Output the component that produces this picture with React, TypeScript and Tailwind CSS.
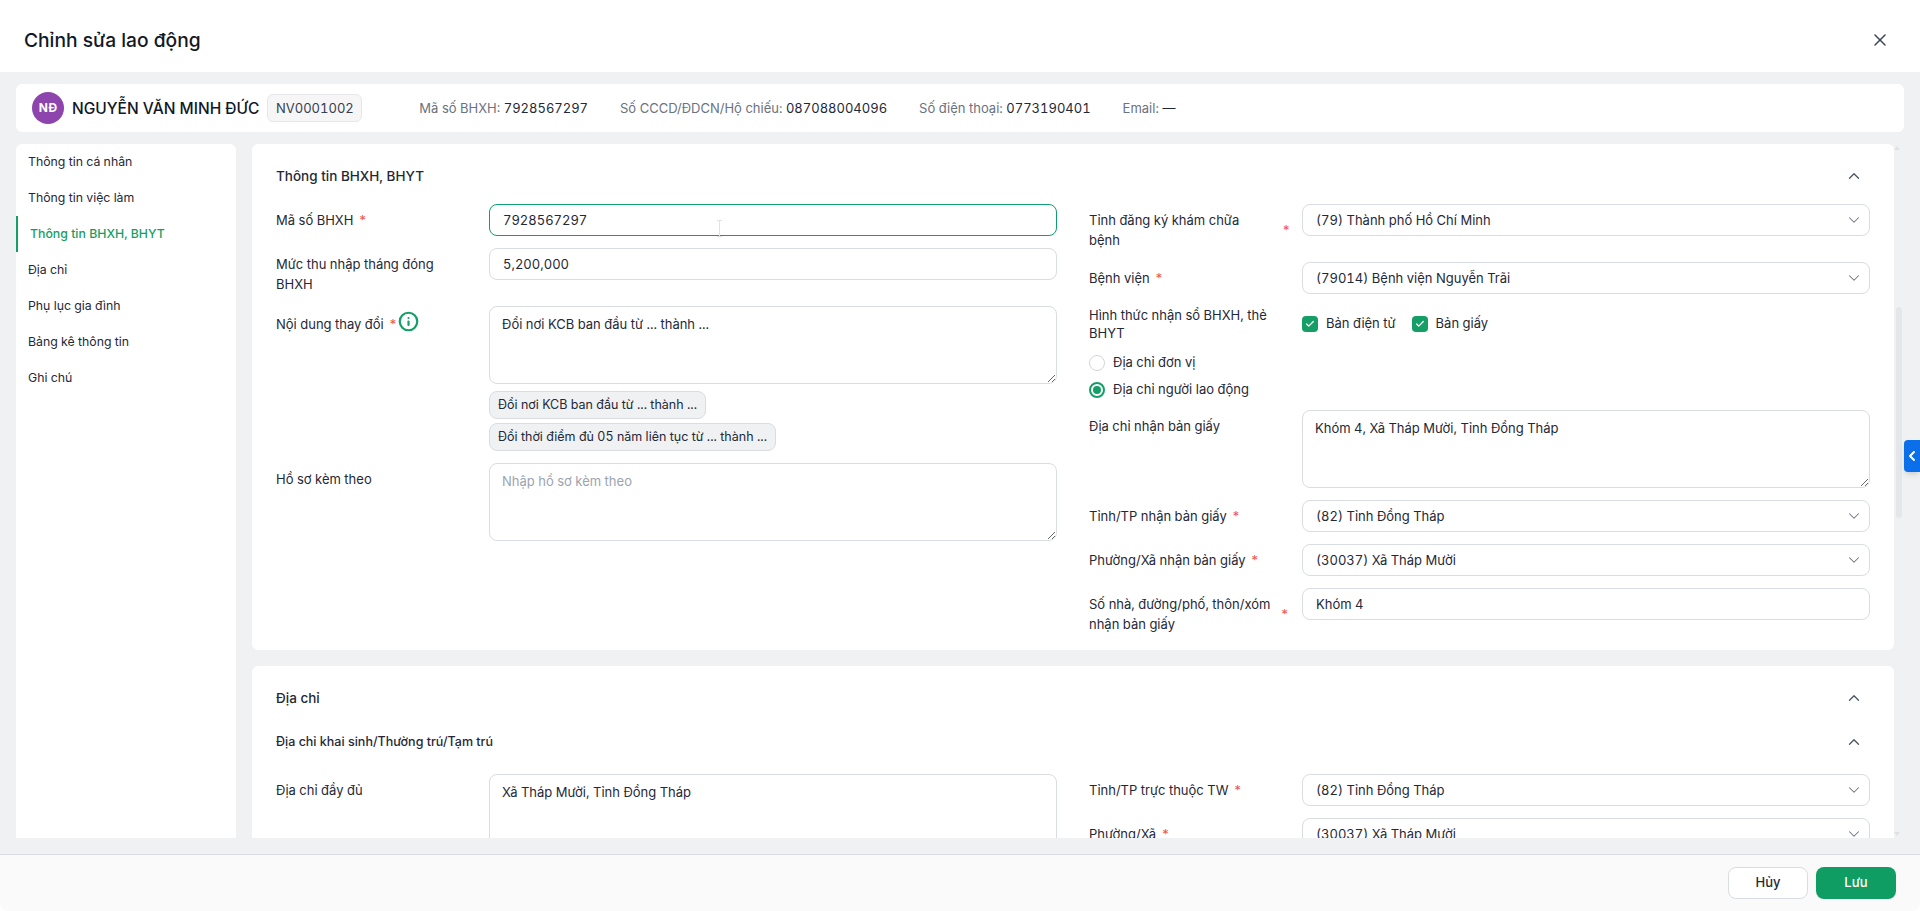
import { ReactNode } from 'react';
import { Check, ChevronDown, ChevronLeft, ChevronUp, Info, X } from 'lucide-react';

const navItems = [
  'Thông tin cá nhân',
  'Thông tin việc làm',
  'Thông tin BHXH, BHYT',
  'Địa chỉ',
  'Phụ lục gia đình',
  'Bảng kê thông tin',
  'Ghi chú',
];

const Star = () => <span className="shrink-0 text-[#f05252]">*</span>;

const Label = ({ text, required, tight }: { text: ReactNode; required?: boolean; tight?: boolean }) => (
  <div className={`flex w-[200px] shrink-0 items-center gap-[5px] self-start text-[13px] text-[#1f2937] ${tight ? 'leading-[18px]' : 'leading-5 pt-[6px]'}`}>
    <span>{text}</span>
    {required && <Star />}
  </div>
);

const Row = ({ children }: { children: ReactNode }) => <div className="flex gap-[13px]">{children}</div>;

const TextInput = ({ value, focused }: { value: string; focused?: boolean }) => (
  <input
    readOnly
    defaultValue={value}
    className={`h-8 min-w-0 flex-1 rounded-lg border bg-white px-[13px] text-[13px] text-[#1f2937] outline-none ${focused ? 'border-[#0e9f6e]' : 'border-[#d9dce1]'}`}
  />
);

const TextArea = ({ value, placeholder }: { value?: string; placeholder?: string }) => (
  <textarea
    readOnly
    defaultValue={value}
    placeholder={placeholder}
    className="block h-[78px] w-full rounded-lg border border-[#d9dce1] bg-white px-3 py-[7px] text-[13px] leading-5 text-[#1f2937] outline-none placeholder:text-[#9ca3af]"
  />
);

const Select = ({ value }: { value: string }) => (
  <div className="flex h-8 min-w-0 flex-1 items-center justify-between rounded-lg border border-[#d9dce1] bg-white pl-[13px] pr-[6px] text-[13px] text-[#1f2937]">
    <span className="pt-px">{value}</span>
    <ChevronDown size={18} strokeWidth={1.4} className="text-[#6b7280]" />
  </div>
);

const Checkbox = ({ label }: { label: string }) => (
  <div className="flex items-center gap-2 text-[13px] text-[#1f2937]">
    <span className="flex size-4 items-center justify-center rounded-[4px] bg-[#169e67]">
      <Check size={10} strokeWidth={3} className="text-white" />
    </span>
    {label}
  </div>
);

const Radio = ({ label, checked }: { label: string; checked?: boolean }) => (
  <div className="flex h-[18px] items-center gap-2 text-[13px] text-[#1f2937]">
    {checked ? (
      <span className="flex size-4 items-center justify-center rounded-full border-2 border-[#169e67]">
        <span className="size-2 rounded-full bg-[#169e67]" />
      </span>
    ) : (
      <span className="size-4 rounded-full border border-[#d1d5db] bg-white" />
    )}
    {label}
  </div>
);

const SectionHead = ({ title, small }: { title: string; small?: boolean }) => (
  <div className="flex h-8 items-center justify-between pr-[7px]">
    <span className={`pt-px font-medium text-[#1f2937] ${small ? 'text-[12.5px]' : 'text-[13.5px]'}`}>{title}</span>
    <ChevronUp size={18} strokeWidth={1.75} className="text-[#4b5563]" />
  </div>
);

const Meta = ({ label, value }: { label: string; value: string }) => (
  <span className="pt-px text-[13px] text-[#6b7280]">
    {label} <span className="text-[#1f2937]">{value}</span>
  </span>
);

export default function App() {
  return (
    <div className="flex h-screen flex-col overflow-hidden bg-white font-['Inter',sans-serif] tabular-nums">
      <header className="flex h-[72px] shrink-0 items-center justify-between pl-6 pr-[30px] pt-2">
        <h1 className="text-[19.2px] font-medium text-[#111827]">Chỉnh sửa lao động</h1>
        <X size={20} strokeWidth={1.75} className="text-[#374151]" />
      </header>

      <main className="flex min-h-0 flex-1 flex-col gap-3 bg-[#f0f1f3] pl-4 pr-4 pt-3 pb-4">
        <div className="flex h-12 shrink-0 items-center rounded-md bg-white pl-4">
          <span className="flex size-8 items-center justify-center rounded-full bg-[#8e44ad] text-[12px] font-bold text-white">NĐ</span>
          <span className="ml-2 pt-px text-[15.5px] font-medium text-[#111827]">NGUYỄN VĂN MINH ĐỨC</span>
          <span className="ml-2 flex h-7 w-[95px] items-center justify-center rounded-md border border-[#e5e7eb] bg-[#f6f6f7] pt-px text-[13px] text-[#374151]">NV0001002</span>
          <div className="ml-[57px] flex gap-8">
            <Meta label="Mã số BHXH:" value="7928567297" />
            <Meta label="Số CCCD/ĐDCN/Hộ chiếu:" value="087088004096" />
            <Meta label="Số điện thoại:" value="0773190401" />
            <Meta label="Email:" value="—" />
          </div>
        </div>

        <div className="flex min-h-0 flex-1 gap-4">
          <nav className="w-[220px] shrink-0 rounded-t-md bg-white">
            {navItems.map((item, i) => (
              <div
                key={item}
                className={`flex h-9 items-center pt-px text-[12.3px] ${i === 2 ? 'border-l-2 border-[#169e67] pl-3 font-medium text-[#169e67]' : 'pl-3 text-[#1f2937]'}`}
              >
                {item}
              </div>
            ))}
          </nav>

          <div className="relative min-w-0 flex-1 overflow-hidden pr-[10px]">
            <section className="rounded-md bg-white px-6 pb-4 pt-4">
              <SectionHead title="Thông tin BHXH, BHYT" />
              <div className="mt-3 grid grid-cols-2 gap-8">
                <div className="flex flex-col gap-3">
                  <Row>
                    <Label text="Mã số BHXH" required />
                    <div className="relative flex flex-1">
                      <TextInput value="7928567297" focused />
                      <svg width="7" height="17" viewBox="0 0 7 17" className="absolute left-[227px] top-4 text-[#dfe1e4]" fill="none" stroke="currentColor">
                        <path d="M1 .5h5M3.5.5v16M1 16.5h5" />
                      </svg>
                    </div>
                  </Row>
                  <Row>
                    <Label text={<>Mức thu nhập tháng đóng<br />BHXH</>} />
                    <TextInput value="5,200,000" />
                  </Row>
                  <Row>
                    <div className="flex w-[200px] shrink-0 items-center gap-[5px] self-start pt-2 text-[13px] leading-5 text-[#1f2937]">
                      Nội dung thay đổi <Star />
                      <Info size={21} strokeWidth={2.5} className="-ml-1 -mt-[6px] text-[#169e67]" />
                    </div>
                    <div className="flex min-w-0 flex-1 flex-col items-start">
                      <TextArea value="Đổi nơi KCB ban đầu từ ... thành ..." />
                      <span className="mt-[7px] flex h-7 items-center rounded-lg border border-[#d9dce1] bg-[#f0f1f3] px-2 text-[12.5px] text-[#1f2937]">Đổi nơi KCB ban đầu từ ... thành ...</span>
                      <span className="mt-1 flex h-7 items-center rounded-lg border border-[#d9dce1] bg-[#f0f1f3] px-2 text-[12.5px] text-[#1f2937]">Đổi thời điểm đủ 05 năm liên tục từ ... thành ...</span>
                    </div>
                  </Row>
                  <Row>
                    <Label text="Hồ sơ kèm theo" />
                    <TextArea placeholder="Nhập hồ sơ kèm theo" />
                  </Row>
                </div>

                <div className="flex flex-col gap-3">
                  <Row>
                    <Label text={<span className="block w-[188px]">Tỉnh đăng ký khám chữa<br />bệnh</span>} required />
                    <Select value="(79) Thành phố Hồ Chí Minh" />
                  </Row>
                  <Row>
                    <Label text="Bệnh viện" required />
                    <Select value="(79014) Bệnh viện Nguyễn Trãi" />
                  </Row>
                  <Row>
                    <Label text="Hình thức nhận sổ BHXH, thẻ BHYT" tight />
                    <div className="flex items-center gap-4">
                      <Checkbox label="Bản điện tử" />
                      <Checkbox label="Bản giấy" />
                    </div>
                  </Row>
                  <div className="-mb-px flex flex-col gap-[9px]">
                    <Radio label="Địa chỉ đơn vị" />
                    <Radio label="Địa chỉ người lao động" checked />
                  </div>
                  <Row>
                    <Label text="Địa chỉ nhận bản giấy" />
                    <TextArea value="Khóm 4, Xã Tháp Mười, Tỉnh Đồng Tháp" />
                  </Row>
                  <Row>
                    <Label text="Tỉnh/TP nhận bản giấy" required />
                    <Select value="(82) Tỉnh Đồng Tháp" />
                  </Row>
                  <Row>
                    <Label text="Phường/Xã nhận bản giấy" required />
                    <Select value="(30037) Xã Tháp Mười" />
                  </Row>
                  <Row>
                    <Label text="Số nhà, đường/phố, thôn/xóm nhận bản giấy" required />
                    <TextInput value="Khóm 4" />
                  </Row>
                </div>
              </div>
            </section>

            <section className="mt-4 rounded-md bg-white px-6 pb-4 pt-4">
              <SectionHead title="Địa chỉ" />
              <div className="mt-3">
                <SectionHead title="Địa chỉ khai sinh/Thường trú/Tạm trú" small />
              </div>
              <div className="mt-4 grid grid-cols-2 gap-8">
                <Row>
                  <Label text="Địa chỉ đầy đủ" />
                  <TextArea value="Xã Tháp Mười, Tỉnh Đồng Tháp" />
                </Row>
                <div className="flex flex-col gap-3">
                  <Row>
                    <Label text="Tỉnh/TP trực thuộc TW" required />
                    <Select value="(82) Tỉnh Đồng Tháp" />
                  </Row>
                  <Row>
                    <Label text="Phường/Xã" required />
                    <Select value="(30037) Xã Tháp Mười" />
                  </Row>
                </div>
              </div>
            </section>

            {/* fake scrollbar, the list is cut off at the bottom */}
            <span className="absolute right-[4px] top-[2px] size-0 border-x-[3px] border-b-[4px] border-x-transparent border-b-[#dfe1e4]" />
            <span className="absolute right-[2px] top-[163px] h-[211px] w-[6px] rounded-sm bg-[#e4e6e9]" />
            <span className="absolute bottom-[2px] right-[4px] size-0 border-x-[3px] border-t-[4px] border-x-transparent border-t-[#dfe1e4]" />
          </div>
        </div>
      </main>

      <footer className="flex h-[57px] shrink-0 items-center justify-end gap-2 rounded-b-lg border-t border-[#d9dce1] bg-[#fafafa] pr-6">
        <button className="h-8 w-20 rounded-lg border border-[#d9dce1] bg-white text-[13px] font-medium text-[#1f2937]">Hủy</button>
        <button className="h-8 w-20 rounded-lg bg-[#0f9d63] text-[13px] font-medium text-white">Lưu</button>
      </footer>

      <button className="absolute right-0 top-[440px] flex h-8 w-4 items-center justify-center rounded-l-[4px] bg-[#0a6fe8] text-white shadow-md">
        <ChevronLeft size={16} strokeWidth={3} />
      </button>
    </div>
  );
}
